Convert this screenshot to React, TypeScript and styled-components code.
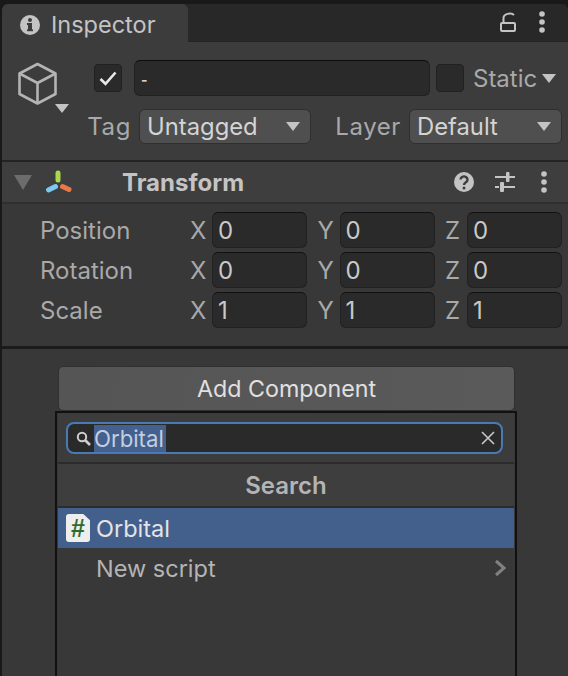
import React from "react";
import styled, { createGlobalStyle } from "styled-components";

const Global = createGlobalStyle`
  html, body { margin: 0; padding: 0; background: #191919; }
  body { width: 568px; height: 676px; overflow: hidden; font-family: Inter, "Noto Sans", sans-serif; }
  * { box-sizing: border-box; }
`;

const Window = styled.div`
  position: relative;
  width: 568px;
  height: 676px;
  padding: 4px 0 0 2px;
  overflow: hidden;
  background: #191919;
  display: flex;
  flex-direction: column;
`;
const TabBar = styled.div`
  height: 38px;
  flex: none;
  display: flex;
  align-items: stretch;
  background: #282828;
  border-radius: 6px 6px 0 0;
  border-bottom: 1px solid #232323;
`;
const Tab = styled.div`
  width: 186px;
  margin-bottom: -1px;
  display: flex;
  align-items: center;
  gap: 11px;
  padding: 3px 0 0 18px;
  background: #3c3c3c;
  border-radius: 6px 6px 0 0;
  color: #c4c4c4;
  font-size: 23.5px;
`;
const TabActions = styled.div`
  margin-left: auto;
  display: flex;
  align-items: center;
  gap: 22px;
  padding: 0 22px 1px 0;
`;
const Header = styled.div`
  height: 120px;
  flex: none;
  background: #3c3c3c;
  border-bottom: 2px solid #232323;
  display: flex;
  flex-direction: column;
  padding-top: 18px;
`;
const NameRow = styled.div`
  display: flex;
  align-items: center;
  height: 36px;
  padding-left: 15px;
`;
const CubeSlot = styled.div`
  position: relative;
  width: 77px;
  height: 42px;
  flex: none;
  align-self: flex-start;
  margin-top: 2px;
`;
const CubeArrow = styled.div`
  position: absolute;
  left: 38px;
  top: 42px;
  width: 0;
  height: 0;
  border-left: 7.5px solid transparent;
  border-right: 7.5px solid transparent;
  border-top: 9px solid #c4c4c4;
`;
const Check = styled.div`
  width: 28px;
  height: 28px;
  flex: none;
  border-radius: 4px;
  background: #2a2a2a;
  border: 1px solid #212121;
  display: flex;
  align-items: center;
  justify-content: center;
`;
const NameInput = styled.div`
  width: 296px;
  height: 36px;
  margin-left: 12px;
  flex: none;
  padding: 3px 7px 0 6px;
  display: flex;
  align-items: center;
  background: #2a2a2a;
  border: 1px solid #212121;
  border-top-color: #0d0d0d;
  border-radius: 6px;
  color: #d2d2d2;
  font-size: 14px;
  font-weight: 700;
`;
const StaticCheck = styled(Check)`
  margin-left: 6px;
`;
const StaticLabel = styled.div`
  margin-left: 9px;
  color: #a9a9a9;
  font-size: 24px;
`;
const DownArrow = styled.div<{ $c?: string }>`
  width: 0;
  height: 0;
  flex: none;
  border-left: 7.5px solid transparent;
  border-right: 7.5px solid transparent;
  border-top: 9px solid ${(p) => p.$c || "#c4c4c4"};
`;
const StaticArrow = styled(DownArrow)`
  margin-left: 5px;
`;
const TagRow = styled.div`
  display: flex;
  align-items: center;
  height: 35px;
  margin-top: 13px;
`;
const TagLabel = styled.div<{ $w: number }>`
  width: ${(p) => p.$w}px;
  flex: none;
  text-align: right;
  color: #a9a9a9;
  font-size: 24px;
  letter-spacing: 0.6px;
  padding-right: 8px;
`;
const Select = styled.div<{ $w: number }>`
  width: ${(p) => p.$w}px;
  height: 35px;
  flex: none;
  display: flex;
  align-items: center;
  justify-content: space-between;
  padding: 0 10px 0 7px;
  background: #4f4f4f;
  border: 1px solid #2f2f2f;
  border-radius: 6px;
  color: #d4d4d4;
  font-size: 23.8px;
`;
const ComponentHeader = styled.div`
  height: 42px;
  flex: none;
  display: flex;
  align-items: center;
  background: #3e3e3e;
  border-bottom: 2px solid #2f2f2f;
  padding-left: 12px;
`;
const Fold = styled.div`
  width: 0;
  height: 0;
  flex: none;
  border-left: 9px solid transparent;
  border-right: 9px solid transparent;
  border-top: 15px solid #6c6c6c;
`;
const Gizmo = styled.svg`
  margin-left: 13px;
  flex: none;
`;
const ComponentTitle = styled.div`
  margin-left: 49px;
  padding-top: 1px;
  color: #c4c4c4;
  font-size: 24px;
  font-weight: 700;
`;
const HeaderActions = styled.div`
  margin-left: auto;
  display: flex;
  align-items: center;
  gap: 21px;
  padding-right: 20px;
  & > svg:last-child { margin-left: 4px; }
`;
const TransformBody = styled.div`
  height: 145px;
  flex: none;
  padding: 8px 0 0 38px;
  display: flex;
  flex-direction: column;
  gap: 4px;
  background: #383838;
  border-bottom: 3px solid #1b1b1b;
`;
const VecRow = styled.div`
  display: flex;
  align-items: center;
  height: 36px;
`;
const VecLabel = styled.div`
  width: 150px;
  flex: none;
  color: #a9a9a9;
  font-size: 24px;
`;
const Axis = styled.div`
  width: 22px;
  flex: none;
  text-align: left;
  color: #a9a9a9;
  font-size: 24px;
`;
const NumField = styled.div`
  width: 95px;
  height: 36px;
  flex: none;
  margin-right: 10.5px;
  &:last-child { margin-right: 0; }
  display: flex;
  align-items: center;
  padding-left: 5px;
  background: #2a2a2a;
  border: 1px solid #212121;
  border-top-color: #111;
  border-radius: 6px;
  color: #c8c8c8;
  font-size: 24px;
`;
const Lower = styled.div`
  flex: 1;
  padding: 17px 0 0 56px;
  background: #383838;
`;
const AddButton = styled.div`
  width: 457px;
  height: 45px;
  display: flex;
  align-items: center;
  justify-content: center;
  border: 1px solid #303030;
  border-radius: 5px;
  background: linear-gradient(100deg, #555555, #5a5a5a);
  color: #e0e0e0;
  font-size: 23.25px;
`;
const Popup = styled.div`
  position: absolute;
  left: 55px;
  top: 411px;
  width: 462px;
  height: 270px;
  padding: 0 1px;
  background: #383838;
  border: 2px solid #111;
  display: flex;
  flex-direction: column;
`;
const SearchArea = styled.div`
  height: 51px;
  flex: none;
  background: #3c3c3c;
  padding: 9px 11px 0 8px;
  border-bottom: 2px solid #2b2b2b;
`;
const SearchBox = styled.div`
  height: 32px;
  display: flex;
  align-items: center;
  background: #2a2a2a;
  border: 2px solid #4a7ab5;
  border-radius: 8px;
  padding: 0 6px 0 8px;
`;
const Selected = styled.span`
  margin-left: 3px;
  height: 27px;
  padding-right: 2px;
  display: flex;
  align-items: center;
  background: #43608f;
  color: #c4cede;
  font-size: 22.2px;
`;
const ClearSlot = styled.div`
  margin-left: auto;
  display: flex;
`;
const SearchTitle = styled.div`
  height: 44px;
  flex: none;
  display: flex;
  align-items: center;
  justify-content: center;
  background: #3e3e3e;
  border-bottom: 2px solid #2b2b2b;
  color: #b4b4b4;
  font-size: 24px;
  font-weight: 600;
`;
const Item = styled.div<{ $active?: boolean }>`
  height: 40px;
  flex: none;
  display: flex;
  align-items: center;
  background: ${(p) => (p.$active ? "#43608d" : "transparent")};
  color: ${(p) => (p.$active ? "#e4e4e4" : "#b4b4b4")};
  font-size: 23.5px;
  padding: 0 8px;
`;
const ItemText = styled.span<{ $indent?: boolean }>`
  margin-left: ${(p) => (p.$indent ? "30px" : "6px")};
`;
const ScriptIcon = styled.div`
  width: 24px;
  height: 28px;
  flex: none;
  display: flex;
  align-items: center;
  justify-content: center;
  background: #eeeeee;
  border-radius: 3px;
  clip-path: polygon(0 0, 72% 0, 100% 22%, 100% 100%, 0 100%);
  color: #2f6b2c;
  font-family: "Liberation Sans", sans-serif;
  font-size: 25px;
  font-weight: 700;
`;
const Chevron = styled.div`
  margin-left: auto;
  display: flex;
`;

const Axes = ({ label, v }: { label: string; v: string }) => (
  <VecRow>
    <VecLabel>{label}</VecLabel>
    {["X", "Y", "Z"].map((a) => (
      <React.Fragment key={a}>
        <Axis>{a}</Axis>
        <NumField>{v}</NumField>
      </React.Fragment>
    ))}
  </VecRow>
);

const Dots = () => (
  <svg width="8" height="22" viewBox="0 0 8 22">
    <circle cx="4" cy="3" r="2.8" fill="#c4c4c4" />
    <circle cx="4" cy="11" r="2.8" fill="#c4c4c4" />
    <circle cx="4" cy="19" r="2.8" fill="#c4c4c4" />
  </svg>
);

export default function App() {
  return (
    <>
      <Global />
      <Window>
        <TabBar>
          <Tab>
            <svg width="20" height="20" viewBox="0 0 20 20">
              <circle cx="10" cy="10" r="10" fill="#c4c4c4" />
              <rect x="8" y="8" width="4" height="8" fill="#3c3c3c" />
              <rect x="7" y="8" width="2" height="2" fill="#3c3c3c" />
              <rect x="7" y="14.4" width="6" height="1.8" fill="#3c3c3c" />
              <circle cx="10" cy="5" r="2" fill="#3c3c3c" />
            </svg>
            Inspector
          </Tab>
          <TabActions>
            <svg width="16" height="20" viewBox="0 0 16 20" fill="none" stroke="#c4c4c4" strokeWidth="2">
              <rect x="1" y="11" width="14" height="8" rx="1" />
              <path d="M3.5 10 V6 C3.5 2 11 0 14 3" />
            </svg>
            <Dots />
          </TabActions>
        </TabBar>
        <Header>
          <NameRow>
            <CubeSlot>
              <svg width="41" height="43" viewBox="0 0 41 43" fill="none" stroke="#b4b4b4" strokeWidth="2.6" strokeLinejoin="round">
                <path d="M20.5 2 L38.5 11.5 V32 L20.5 41.5 L2.5 32 V11.5 Z" />
                <path d="M2.5 11.5 L20.5 21 L38.5 11.5 M20.5 21 V41.5" />
              </svg>
              <CubeArrow />
            </CubeSlot>
            <Check>
              <svg width="18" height="15" viewBox="0 0 18 15" fill="none" stroke="#e8e8e8" strokeWidth="2.6">
                <path d="M1.5 8 L6.5 12.8 L16.5 1.5" />
              </svg>
            </Check>
            <NameInput>-</NameInput>
            <StaticCheck />
            <StaticLabel>Static</StaticLabel>
            <StaticArrow />
          </NameRow>
          <TagRow>
            <TagLabel $w={137}>Tag</TagLabel>
            <Select $w={172}>
              Untagged
              <DownArrow />
            </Select>
            <TagLabel $w={98}>Layer</TagLabel>
            <Select $w={153}>
              Default
              <DownArrow />
            </Select>
          </TagRow>
        </Header>
        <ComponentHeader>
          <Fold />
          <Gizmo width="28" height="24" viewBox="0 0 28 24" strokeLinecap="round" strokeWidth="5">
            <path d="M13 3 V10" stroke="#a9d84c" />
            <path d="M3.5 20 L10.5 16.5" stroke="#7ec8f2" />
            <path d="M17.5 16.5 L24 19.5" stroke="#e8774a" />
          </Gizmo>
          <ComponentTitle>Transform</ComponentTitle>
          <HeaderActions>
            <svg width="20" height="20" viewBox="0 0 20 20">
              <circle cx="10" cy="10" r="10" fill="#c4c4c4" />
              <path d="M6.5 7.5 a3.5 3.2 0 1 1 5.4 2.8 c-1.2.8-1.9 1.3-1.9 2.7" fill="none" stroke="#3e3e3e" strokeWidth="2.4" />
              <circle cx="10" cy="16" r="1.5" fill="#3e3e3e" />
            </svg>
            <svg width="20" height="20" viewBox="0 0 20 20" fill="#c4c4c4">
              <rect x="0" y="4" width="20" height="2" />
              <rect x="11" y="0" width="3.5" height="10" rx="1" />
              <rect x="0" y="14" width="4" height="2" />
              <rect x="8" y="14" width="12" height="2" />
              <rect x="5" y="10" width="4" height="10" rx="1" />
            </svg>
            <Dots />
          </HeaderActions>
        </ComponentHeader>
        <TransformBody>
          <Axes label="Position" v="0" />
          <Axes label="Rotation" v="0" />
          <Axes label="Scale" v="1" />
        </TransformBody>
        <Lower>
          <AddButton>Add Component</AddButton>
        </Lower>
        <Popup>
          <SearchArea>
            <SearchBox>
              <svg width="15" height="15" viewBox="0 0 15 15" fill="none" stroke="#cfcfcf" strokeWidth="2">
                <circle cx="6" cy="6" r="4.2" />
                <path d="M9 9 L14 14" strokeWidth="2.6" />
              </svg>
              <Selected>Orbital</Selected>
              <ClearSlot>
                <svg width="14" height="14" viewBox="0 0 14 14" stroke="#c8c8c8" strokeWidth="1.6">
                  <path d="M1 1 L13 13 M13 1 L1 13" />
                </svg>
              </ClearSlot>
            </SearchBox>
          </SearchArea>
          <SearchTitle>Search</SearchTitle>
          <Item $active>
            <ScriptIcon>#</ScriptIcon>
            <ItemText>Orbital</ItemText>
          </Item>
          <Item>
            <ItemText $indent>New script</ItemText>
            <Chevron>
              <svg width="12" height="18" viewBox="0 0 12 18" fill="none" stroke="#808080" strokeWidth="3">
                <path d="M2 2 L10 9 L2 16" />
              </svg>
            </Chevron>
          </Item>
        </Popup>
      </Window>
    </>
  );
}
